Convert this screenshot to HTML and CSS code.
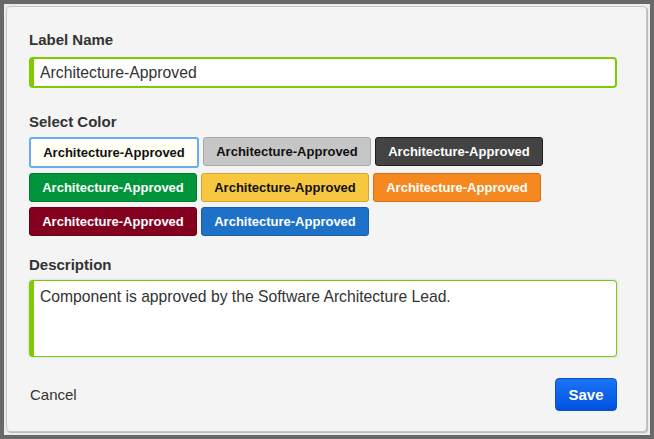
FILE: index.html
```html
<!DOCTYPE html>
<html>
<head>
<meta charset="utf-8">
<link rel="stylesheet" href="styles.css">
</head>
<body>
<div class="frame">
  <form class="panel">
    <label class="field-label">Label Name</label>
    <input class="text-input" type="text" value="Architecture-Approved">

    <label class="field-label label-color">Select Color</label>
    <div class="swatches">
      <div class="swatch-row">
        <span class="swatch swatch-white selected">Architecture-Approved</span>
        <span class="swatch swatch-grey">Architecture-Approved</span>
        <span class="swatch swatch-dark">Architecture-Approved</span>
      </div>
      <div class="swatch-row">
        <span class="swatch swatch-green">Architecture-Approved</span>
        <span class="swatch swatch-yellow">Architecture-Approved</span>
        <span class="swatch swatch-orange">Architecture-Approved</span>
      </div>
      <div class="swatch-row">
        <span class="swatch swatch-red">Architecture-Approved</span>
        <span class="swatch swatch-blue">Architecture-Approved</span>
      </div>
    </div>

    <label class="field-label label-desc">Description</label>
    <textarea class="text-area">Component is approved by the Software Architecture Lead.</textarea>

    <div class="footer">
      <span class="cancel">Cancel</span>
      <span class="save">Save</span>
    </div>
  </form>
</div>
</body>
</html>
```
FILE: styles.css
```css
html, body {
  margin: 0;
  padding: 0;
}
body {
  width: 654px;
  height: 439px;
  box-sizing: border-box;
  background: #686868;
  padding: 4px 4px 4px 4px;
  font-family: "Liberation Sans", Arial, Helvetica, sans-serif;
  overflow: hidden;
}
.frame {
  height: 431px;
  box-sizing: border-box;
  background: #ececec;
  padding: 2px 3px 3px 2px;
}
.panel {
  box-sizing: border-box;
  height: 100%;
  margin: 0;
  background: #f4f4f4;
  border: 1px solid #c6c6c6;
  border-radius: 4px;
  box-shadow: 1px 1px 0 #bcbcbc;
  padding: 24px 0 0 22px;
  display: flex;
  flex-direction: column;
  align-items: flex-start;
}
.field-label {
  display: block;
  font-size: 15px;
  line-height: 18px;
  font-weight: bold;
  color: #333;
}
.text-input {
  margin: 8px 0 0 0;
  box-sizing: border-box;
  width: 588px;
  height: 31px;
  border: 2px solid #7fcb00;
  border-left-width: 5px;
  border-radius: 4px;
  background: #fff;
  padding: 0 0 0 6px;
  font-family: "Liberation Sans", Arial, Helvetica, sans-serif;
  font-size: 15.75px;
  color: #333;
  outline: none;
}
.label-color {
  margin-top: 25px;
}
.swatches {
  margin-top: 6px;
  display: flex;
  flex-direction: column;
  gap: 5px;
}
.swatch-row {
  display: flex;
  gap: 4px;
  align-items: flex-start;
}
.swatch {
  box-sizing: border-box;
  width: 168px;
  height: 29px;
  line-height: 27px;
  border: 1px solid transparent;
  border-radius: 3px;
  text-align: center;
  font-size: 13px;
  font-weight: bold;
  color: #fff;
  white-space: nowrap;
}
.swatch-white {
  background: #fffff4;
  border-color: #b9b9b9;
  color: #111;
}
.swatch-white.selected {
  width: 170px;
  height: 31px;
  border: 2px solid #66aef3;
}
.swatch-grey {
  background: #c6c6c6;
  border-color: #a8a8a8;
  color: #111;
}
.swatch-dark {
  background: #434343;
  border-color: #1e1e1e;
}
.swatch-green {
  background: #00953b;
  border-color: #007c31;
}
.swatch-yellow {
  background: #f7c83f;
  border-color: #d8a62e;
  color: #111;
}
.swatch-orange {
  background: #f5891f;
  border-color: #d96f16;
}
.swatch-red {
  background: #84001f;
  border-color: #680016;
}
.swatch-blue {
  background: #1d71c8;
  border-color: #195ea9;
}
.label-desc {
  margin-top: 20px;
}
.text-area {
  margin: 6px 0 0 0;
  box-sizing: border-box;
  width: 588px;
  height: 77px;
  border: 1px solid #7fcb00;
  border-left-width: 5px;
  border-radius: 4px;
  background: #fff;
  box-shadow: 0 0 3px rgba(120, 170, 230, 0.45);
  padding: 6px 6px;
  font-family: "Liberation Sans", Arial, Helvetica, sans-serif;
  font-size: 15.7px;
  line-height: 20px;
  color: #333;
  resize: none;
  outline: none;
}
.footer {
  margin-top: 21px;
  width: 588px;
  display: flex;
  justify-content: space-between;
  align-items: center;
}
.cancel {
  padding-left: 1px;
  font-size: 15px;
  color: #333;
}
.save {
  box-sizing: border-box;
  width: 62px;
  height: 33px;
  line-height: 31px;
  text-align: center;
  border: 1px solid #0c52cc;
  border-radius: 4px;
  background: linear-gradient(#1b74f6, #0052de);
  color: #fff;
  font-size: 15px;
  font-weight: bold;
}
```
